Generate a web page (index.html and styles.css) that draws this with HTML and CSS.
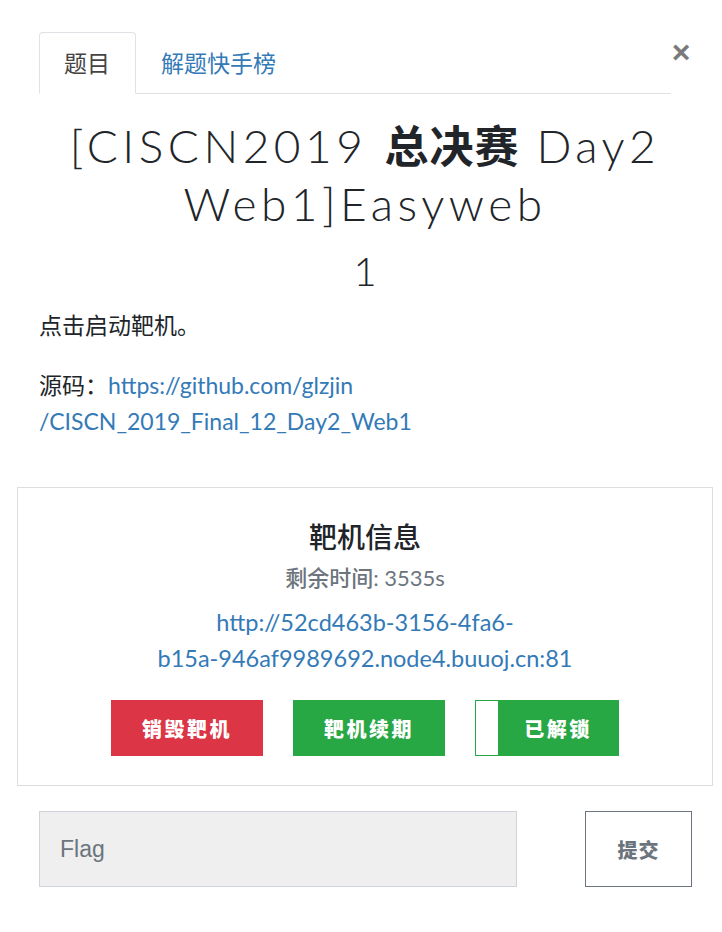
FILE: index.html
```html
<!DOCTYPE html>
<html lang="zh">
<head>
<meta charset="utf-8">
<link rel="stylesheet" href="styles.css">
</head>
<body>
<div class="modal">
  <div class="content">
    <div class="tabbar">
      <div class="tabs">
        <div class="tab active">题目</div>
        <div class="tab">解题快手榜</div>
      </div>
      <div class="close">×</div>
    </div>
    <h2 class="title">[CISCN2019 <b>总决赛</b> Day2<br>Web1]Easyweb</h2>
    <h3 class="value">1</h3>
    <p class="desc">点击启动靶机。</p>
    <p class="desc">源码：<a href="#">https://github.com/glzjin<br>/CISCN_2019_Final_12_Day2_Web1</a></p>
  </div>
  <div class="card">
    <div class="card-title">靶机信息</div>
    <div class="remain"><span class="cjk">剩余时间</span>: 3535s</div>
    <a class="url" href="#">http://52cd463b-3156-4fa6-<br>b15a-946af9989692.node4.buuoj.cn:81</a>
    <div class="btns">
      <div class="btn red">销毁靶机</div>
      <div class="btn green">靶机续期</div>
      <div class="btn unlocked"><span class="blank"></span><span class="lbl">已解锁</span></div>
    </div>
  </div>
  <div class="content">
    <div class="flagrow">
      <div class="flag">Flag</div>
      <div class="submit">提交</div>
    </div>
  </div>
</div>
</body>
</html>
```
FILE: styles.css
```css
* { box-sizing: border-box; }
body {
  margin: 0;
  background: #fff;
  font-family: "Lato", "Noto Sans CJK SC", sans-serif;
  color: #212529;
}
.modal {
  padding: 32px 9px 0 17px;
}
.content {
  padding: 0 22px;
}
.tabbar {
  display: flex;
  align-items: flex-start;
}
.tabs {
  display: flex;
  flex: 1;
  border-bottom: 1px solid #dee2e6;
  height: 62px;
}
.tab {
  font-family: "Noto Sans CJK SC", sans-serif;
  font-size: 23px;
  line-height: 58px;
  padding: 0 25px 0 24px;
  color: #337ab7;
  margin-bottom: -1px;
  border: 1px solid transparent;
}
.tab.active {
  color: #444;
  border: 1px solid #dee2e6;
  border-bottom-color: #fff;
  background: #fff;
  border-radius: 4px 4px 0 0;
}
.close {
  width: 20px;
  text-align: center;
  font-family: "Liberation Sans", sans-serif;
  font-weight: bold;
  font-size: 32px;
  line-height: 40px;
  color: #7a7a7a;
}
.title {
  margin: 21px 0 0;
  text-align: center;
  font-family: "Lato", "Noto Sans CJK SC", sans-serif;
  font-weight: 300;
  font-size: 46px;
  line-height: 58px;
  letter-spacing: 4.5px;
  color: #212529;
}
.title b {
  font-family: "Noto Sans CJK SC", sans-serif;
  font-weight: 700;
  font-size: 44px;
  letter-spacing: 1px;
}
.value {
  margin: 14px 0 0;
  text-align: center;
  font-weight: 300;
  font-size: 40px;
  line-height: 48px;
}
.desc {
  margin: 24px 0 0;
  font-size: 23px;
  line-height: 36px;
  color: #212529;
}
.value + .desc { margin-top: 12px; }
a {
  color: #337ab7;
  text-decoration: none;
}
.card {
  margin-top: 48px;
  border: 1px solid #dddddd;
  padding: 30px 0 29px;
  text-align: center;
}
.card-title {
  font-family: "Noto Sans CJK SC", sans-serif;
  font-weight: 500;
  font-size: 28px;
  line-height: 36px;
}
.remain {
  margin-top: 7px;
  font-size: 22px;
  line-height: 30px;
  color: #6c757d;
}
.remain .cjk { font-weight: 500; font-family: "Noto Sans CJK SC", sans-serif; }
.url {
  display: block;
  margin-top: 11px;
  font-size: 23.5px;
  line-height: 36px;
}
.btns {
  margin-top: 24px;
  display: flex;
  justify-content: center;
  gap: 30px;
}
.btn {
  width: 152px;
  height: 56px;
  display: flex;
  align-items: center;
  justify-content: center;
  color: #fff;
  font-family: "Noto Sans CJK SC", sans-serif;
  font-weight: 900;
  font-size: 20px;
  letter-spacing: 2.5px;
}
.red { background: #dc3545; }
.green { background: #28a745; }
.unlocked {
  width: 144px;
  background: #28a745;
  border: 1px solid #28a745;
  justify-content: flex-start;
}
.unlocked .blank {
  width: 22px;
  align-self: stretch;
  background: #fff;
}
.unlocked .lbl {
  flex: 1;
  text-align: center;
}
.flagrow {
  margin-top: 25px;
  display: flex;
  justify-content: space-between;
}
.flag {
  width: 478px;
  height: 76px;
  background: #efefef;
  border: 1px solid #ced4da;
  font-family: "Liberation Sans", sans-serif;
  font-size: 23px;
  color: #6c757d;
  padding-left: 20px;
  display: flex;
  align-items: center;
}
.submit {
  width: 107px;
  height: 76px;
  border: 1px solid #6c757d;
  margin-right: -1px;
  display: flex;
  align-items: center;
  justify-content: center;
  font-family: "Noto Sans CJK SC", sans-serif;
  font-weight: 900;
  font-size: 20px;
  color: #6c757d;
  letter-spacing: 1px;
}
```
